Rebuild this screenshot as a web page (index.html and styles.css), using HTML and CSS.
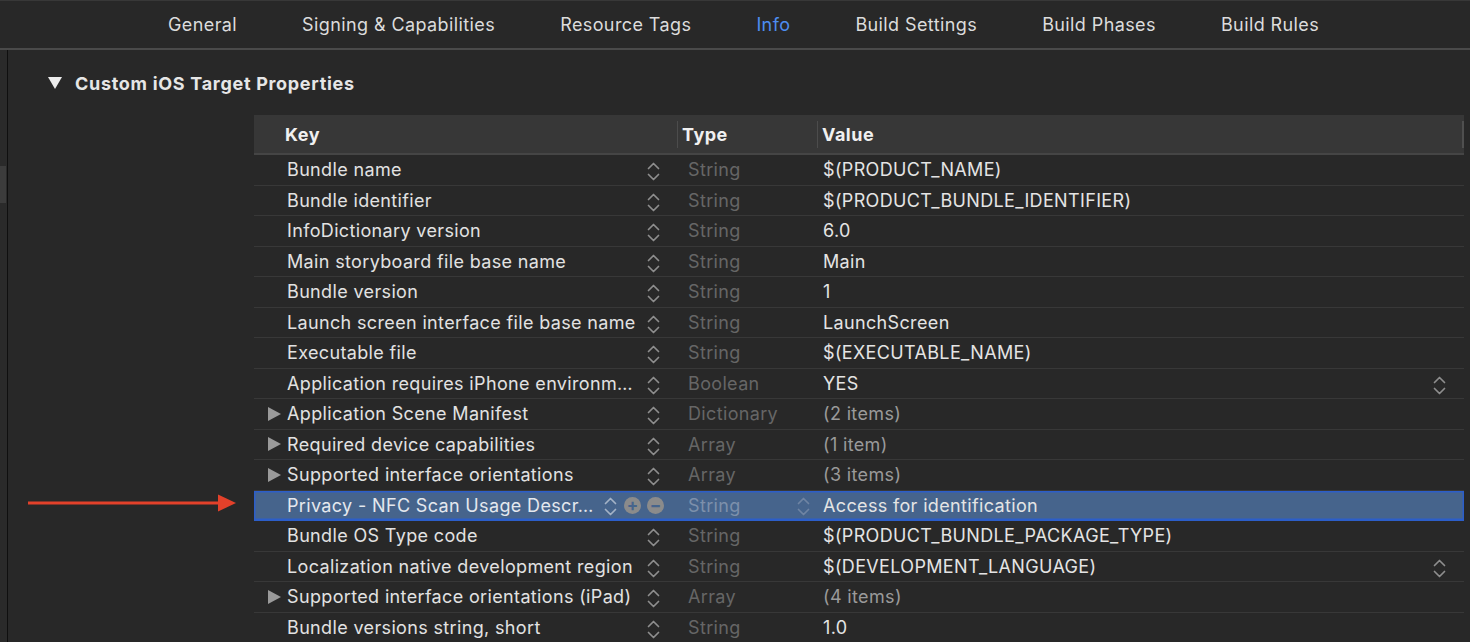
FILE: index.html
```html
<!DOCTYPE html>
<html>
<head>
<meta charset="utf-8">
<link rel="stylesheet" href="styles.css">
</head>
<body>
<svg class="defs" width="0" height="0" aria-hidden="true">
  <symbol id="step" viewBox="0 0 13 19">
    <polyline points="1.5,6.5 6.5,1.5 11.5,6.5" fill="none" stroke="currentColor" stroke-width="1.7" stroke-linecap="round" stroke-linejoin="round"/>
    <polyline points="1.5,12.5 6.5,17.5 11.5,12.5" fill="none" stroke="currentColor" stroke-width="1.7" stroke-linecap="round" stroke-linejoin="round"/>
  </symbol>
</svg>

<nav class="tabs">
  <span class="tab">General</span>
  <span class="tab">Signing &amp; Capabilities</span>
  <span class="tab">Resource Tags</span>
  <span class="tab active">Info</span>
  <span class="tab">Build Settings</span>
  <span class="tab">Build Phases</span>
  <span class="tab">Build Rules</span>
</nav>

<div class="main">
  <div class="sidebar"><div class="thumb"></div></div>
  <div class="content">
    <div class="section-title"><span class="disc-down"></span>Custom iOS Target Properties</div>

    <div class="table">
      <div class="thead">
        <div class="c key">Key</div>
        <div class="c type">Type</div>
        <div class="c value">Value</div>
      </div>

      <div class="row">
        <div class="c key"><span class="tri none"></span><span class="k">Bundle name</span><svg class="step"><use href="#step"/></svg></div>
        <div class="c type">String</div>
        <div class="c value"><span class="v">$(PRODUCT_NAME)</span></div>
      </div>
      <div class="row">
        <div class="c key"><span class="tri none"></span><span class="k">Bundle identifier</span><svg class="step"><use href="#step"/></svg></div>
        <div class="c type">String</div>
        <div class="c value"><span class="v">$(PRODUCT_BUNDLE_IDENTIFIER)</span></div>
      </div>
      <div class="row">
        <div class="c key"><span class="tri none"></span><span class="k">InfoDictionary version</span><svg class="step"><use href="#step"/></svg></div>
        <div class="c type">String</div>
        <div class="c value"><span class="v">6.0</span></div>
      </div>
      <div class="row">
        <div class="c key"><span class="tri none"></span><span class="k">Main storyboard file base name</span><svg class="step"><use href="#step"/></svg></div>
        <div class="c type">String</div>
        <div class="c value"><span class="v">Main</span></div>
      </div>
      <div class="row">
        <div class="c key"><span class="tri none"></span><span class="k">Bundle version</span><svg class="step"><use href="#step"/></svg></div>
        <div class="c type">String</div>
        <div class="c value"><span class="v">1</span></div>
      </div>
      <div class="row">
        <div class="c key"><span class="tri none"></span><span class="k">Launch screen interface file base name</span><svg class="step"><use href="#step"/></svg></div>
        <div class="c type">String</div>
        <div class="c value"><span class="v">LaunchScreen</span></div>
      </div>
      <div class="row">
        <div class="c key"><span class="tri none"></span><span class="k">Executable file</span><svg class="step"><use href="#step"/></svg></div>
        <div class="c type">String</div>
        <div class="c value"><span class="v">$(EXECUTABLE_NAME)</span></div>
      </div>
      <div class="row">
        <div class="c key"><span class="tri none"></span><span class="k">Application requires iPhone environm…</span><svg class="step"><use href="#step"/></svg></div>
        <div class="c type">Boolean</div>
        <div class="c value"><span class="v">YES</span><svg class="step"><use href="#step"/></svg></div>
      </div>
      <div class="row">
        <div class="c key"><span class="tri"></span><span class="k">Application Scene Manifest</span><svg class="step"><use href="#step"/></svg></div>
        <div class="c type">Dictionary</div>
        <div class="c value"><span class="v dim">(2 items)</span></div>
      </div>
      <div class="row">
        <div class="c key"><span class="tri"></span><span class="k">Required device capabilities</span><svg class="step"><use href="#step"/></svg></div>
        <div class="c type">Array</div>
        <div class="c value"><span class="v dim">(1 item)</span></div>
      </div>
      <div class="row">
        <div class="c key"><span class="tri"></span><span class="k">Supported interface orientations</span><svg class="step"><use href="#step"/></svg></div>
        <div class="c type">Array</div>
        <div class="c value"><span class="v dim">(3 items)</span></div>
      </div>
      <div class="row selected">
        <div class="c key"><span class="tri none"></span><span class="k">Privacy - NFC Scan Usage Descr…</span><svg class="step"><use href="#step"/></svg><span class="circ">+</span><span class="circ">−</span></div>
        <div class="c type"><span class="t">String</span><svg class="step"><use href="#step"/></svg></div>
        <div class="c value"><span class="v">Access for identification</span></div>
      </div>
      <div class="row">
        <div class="c key"><span class="tri none"></span><span class="k">Bundle OS Type code</span><svg class="step"><use href="#step"/></svg></div>
        <div class="c type">String</div>
        <div class="c value"><span class="v">$(PRODUCT_BUNDLE_PACKAGE_TYPE)</span></div>
      </div>
      <div class="row">
        <div class="c key"><span class="tri none"></span><span class="k">Localization native development region</span><svg class="step"><use href="#step"/></svg></div>
        <div class="c type">String</div>
        <div class="c value"><span class="v">$(DEVELOPMENT_LANGUAGE)</span><svg class="step"><use href="#step"/></svg></div>
      </div>
      <div class="row">
        <div class="c key"><span class="tri"></span><span class="k">Supported interface orientations (iPad)</span><svg class="step"><use href="#step"/></svg></div>
        <div class="c type">Array</div>
        <div class="c value"><span class="v dim">(4 items)</span></div>
      </div>
      <div class="row">
        <div class="c key"><span class="tri none"></span><span class="k">Bundle versions string, short</span><svg class="step"><use href="#step"/></svg></div>
        <div class="c type">String</div>
        <div class="c value"><span class="v">1.0</span></div>
      </div>
    </div>
  </div>

  <svg class="arrow" width="212" height="22" viewBox="0 0 212 22">
    <line x1="2" y1="11" x2="196" y2="11" stroke="#e3412a" stroke-width="3.2"/>
    <polygon points="192,2.5 210,11 192,19.5" fill="#e3412a"/>
  </svg>
</div>
</body>
</html>
```

FILE: styles.css
```css
* { box-sizing: border-box; }

html, body {
  margin: 0;
  padding: 0;
  background: #282828;
  height: 642px;
  overflow: hidden;
}

body {
  font-family: "Inter", "Liberation Sans", sans-serif;
  font-size: 18px;
  letter-spacing: 0.35px;
  color: #e0e0e0;
}

.defs { position: absolute; }

.tabs {
  height: 50px;
  border-top: 1px solid #383838;
  border-bottom: 2px solid #4a4a4a;
  display: flex;
  align-items: center;
  gap: 65px;
  padding-left: 168px;
  padding-bottom: 1px;
  background: #282828;
}

.tab {
  color: #dcdcdc;
  font-size: 18px;
  letter-spacing: 0.4px;
}

.tab.active { color: #4d8df0; }

.main {
  position: relative;
  display: flex;
  height: 592px;
}

.sidebar {
  width: 8px;
  flex: none;
  background: #2a2a2a;
  border-right: 1px solid #0f0f0f;
  padding-top: 116px;
}

.thumb {
  width: 6px;
  height: 37px;
  background: #3c3c3c;
}

.content {
  flex: 1;
  min-width: 0;
  padding-left: 40px;
}

.section-title {
  display: flex;
  align-items: center;
  height: 22px;
  margin-top: 22px;
  font-weight: 700;
  font-size: 18px;
  letter-spacing: 0.7px;
  color: #e6e6e6;
}

.disc-down {
  width: 0;
  height: 0;
  border-left: 7.5px solid transparent;
  border-right: 7.5px solid transparent;
  border-top: 12px solid #ececec;
  margin-right: 13px;
}

.table {
  margin-top: 21px;
  margin-left: 206px;
  width: 1210px;
}

.thead {
  display: flex;
  height: 40px;
  background: #373737;
  border-bottom: 2px solid #454545;
  padding: 6px 0 5px;
  font-weight: 700;
  letter-spacing: 0.5px;
  color: #f0f0f0;
}

.thead .c {
  display: flex;
  align-items: center;
}

.thead .key { width: 423px; padding-left: 31px; }
.thead .type { width: 140px; border-left: 1px solid #4c4c4c; padding-left: 4px; }
.thead .value { flex: 1; border-left: 1px solid #4c4c4c; padding-left: 4px; border-right: 2px solid #4f4f4f; }

.row {
  display: flex;
  height: 30.5px;
  border-bottom: 1px solid #383838;
  align-items: stretch;
}

.row .c {
  display: flex;
  align-items: center;
  min-width: 0;
}

.row .key {
  width: 423px;
  padding-left: 14px;
  padding-right: 17px;
}

.tri {
  width: 0;
  height: 0;
  border-top: 7.5px solid transparent;
  border-bottom: 7.5px solid transparent;
  border-left: 13px solid #9a9a9a;
  margin-right: 6px;
  flex: none;
}

.tri.none { border-left-color: transparent; }

.k {
  flex: 1;
  min-width: 0;
  white-space: nowrap;
  overflow: hidden;
  color: #e2e2e2;
}

.step {
  width: 13px;
  height: 19px;
  flex: none;
  color: #8e8e8e;
  margin-top: 4px;
}

.row .type {
  width: 140px;
  padding-left: 11px;
  color: #666666;
}

.row .value {
  flex: 1;
  padding-left: 6px;
  padding-right: 18px;
}

.v {
  flex: 1;
  white-space: nowrap;
  color: #e4e4e4;
}

.v.dim { color: #9a9a9a; }

.row.selected {
  background: #46648c;
  box-shadow: inset 0 0 0 1.5px #2c5ec9;
  border-bottom-color: #2c5ec9;
}

.row.selected .key { padding-right: 13px; }
.row.selected .key .step { color: #a4b2c6; margin-right: 7px; margin-top: 2px; }
.row.selected .k { color: #e4e8ee; }
.row.selected .type { padding-right: 7px; }
.t { flex: 1; color: #7d90ab; }
.row.selected .type .step { color: #6f84a3; margin-top: 2px; }

.circ {
  width: 17px;
  height: 17px;
  border-radius: 50%;
  background: #8b8b8b;
  color: #46648c;
  font-weight: 700;
  font-size: 17px;
  line-height: 17px;
  letter-spacing: 0;
  text-align: center;
  flex: none;
}

.circ + .circ { margin-left: 6px; }

.arrow {
  position: absolute;
  left: 26px;
  top: 442px;
}
```
